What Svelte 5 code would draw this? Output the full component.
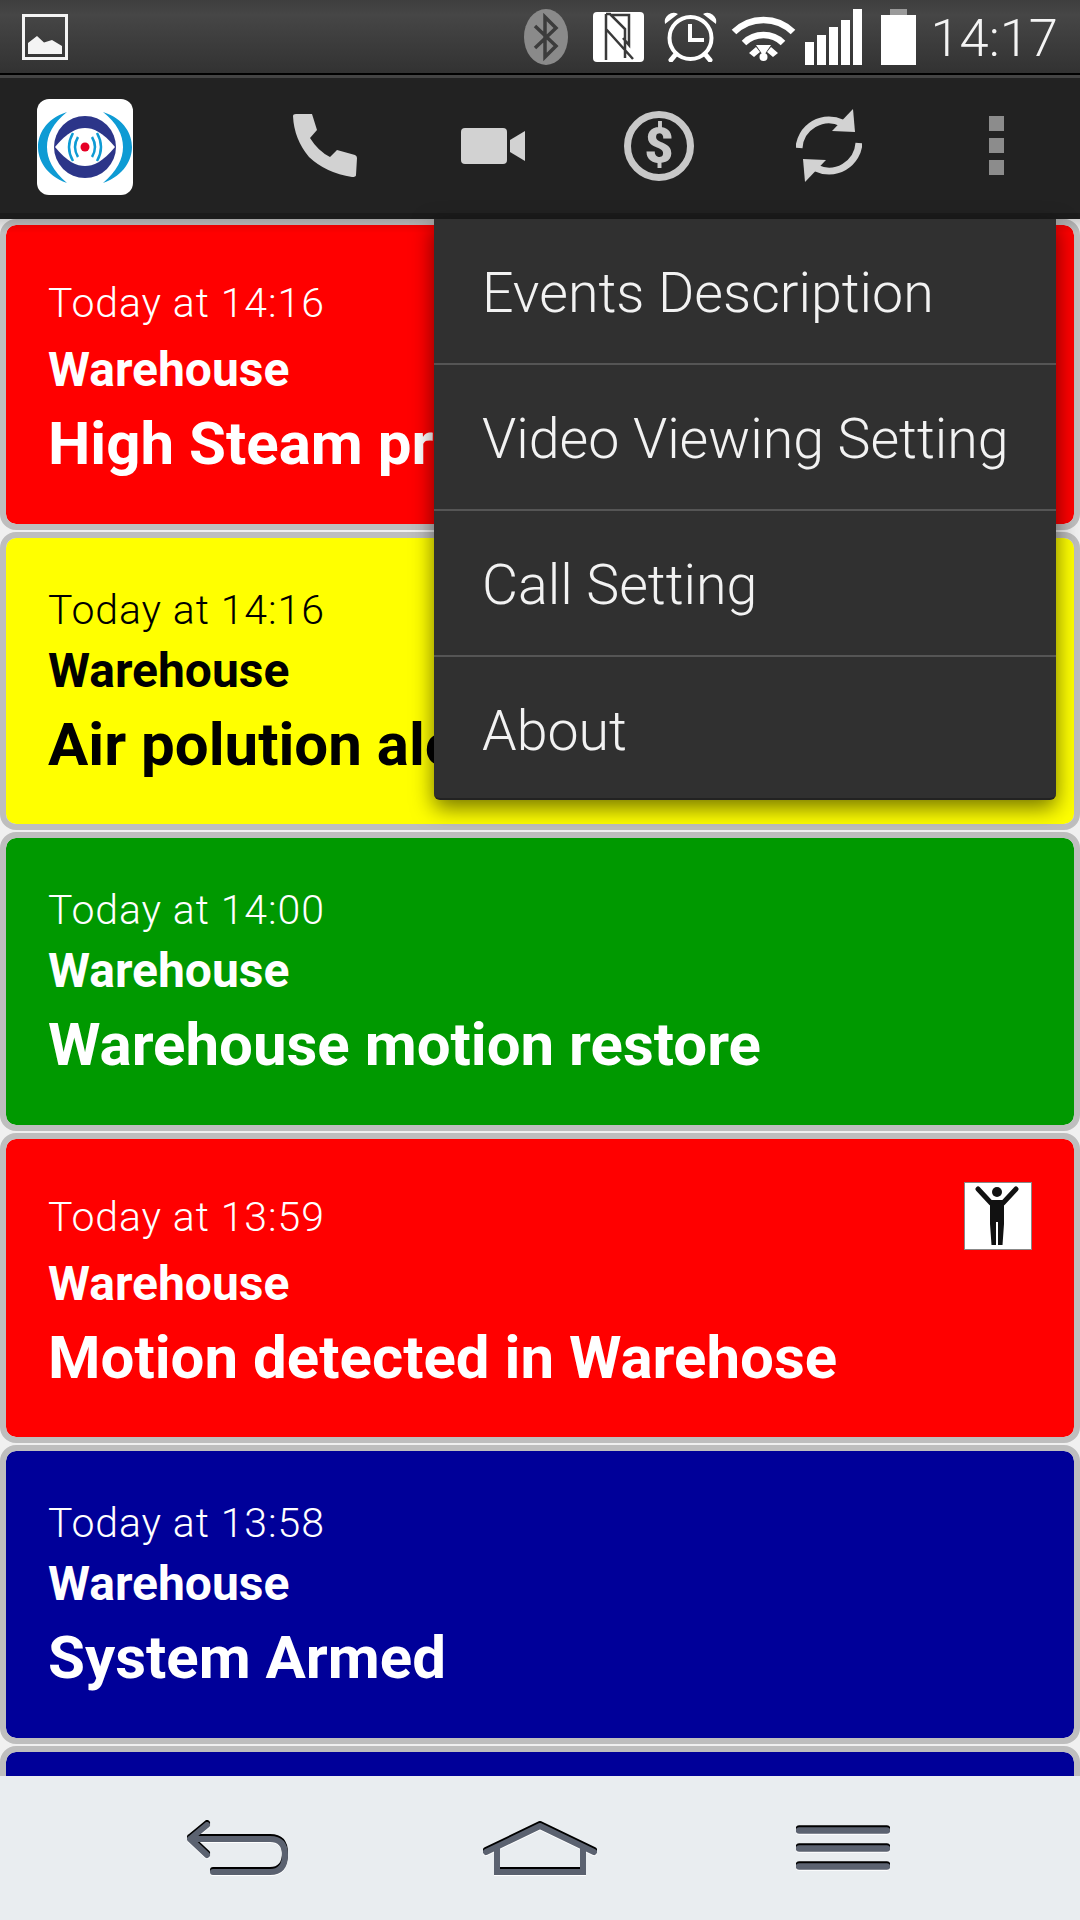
<script>
  const events = [
    { time: "Today at 14:16", place: "Warehouse", title: "High Steam pressure", color: "red", person: true },
    { time: "Today at 14:16", place: "Warehouse", title: "Air polution alert", color: "yellow" },
    { time: "Today at 14:00", place: "Warehouse", title: "Warehouse motion restore", color: "green" },
    { time: "Today at 13:59", place: "Warehouse", title: "Motion detected in Warehose", color: "red", person: true },
    { time: "Today at 13:58", place: "Warehouse", title: "System Armed", color: "navy" },
    { time: "Today at 13:58", place: "Warehouse", title: "System Armed", color: "navy" },
  ];
  const menuItems = ["Events Description", "Video Viewing Setting", "Call Setting", "About"];
  const bars = [23, 30, 38, 45, 56];
</script>

<div class="screen">
  <header class="status">
    <svg class="pic" viewBox="0 0 46 46" width="46" height="46">
      <rect x="1.5" y="1.5" width="43" height="43" fill="none" stroke="#f4f4f4" stroke-width="3" />
      <path d="M6 40V29L15 22L22 28.500L30 26L40 32V40Z" fill="#f4f4f4" />
    </svg>
    <div class="status-right">
      <svg class="sys" viewBox="0 0 44 56" width="44" height="56">
        <ellipse cx="22" cy="28" rx="22" ry="28" fill="#8a8a8a" />
        <path d="M11 17L32 37L21 48V8L32 19L11 39" fill="none" stroke="#3c3c3c" stroke-width="3.500" />
      </svg>
      <svg class="sys nfc" viewBox="0 0 51 50" width="51" height="50">
        <rect width="51" height="50" rx="4" fill="#fff" />
        <path d="M13 2H17L32 17V46M19 3L36 3V33L30 26M13 2V48M13 17L40 47" fill="none" stroke="#3a3a3a" stroke-width="2.500" />
      </svg>
      <svg class="sys alarm" viewBox="0 0 55 51" width="55" height="51">
        <circle cx="27.500" cy="27" r="21" fill="none" stroke="#fff" stroke-width="4" />
        <path d="M2 13A9 9 0 0 1 15 3ZM53 13A9 9 0 0 0 40 3Z" fill="#fff" />
        <path d="M27 13V29H41" fill="none" stroke="#fff" stroke-width="4" />
        <path d="M13 43L8 49M42 43L47 49" stroke="#fff" stroke-width="5" stroke-linecap="round" />
      </svg>
      <svg class="sys wifi" viewBox="0 0 65 48" width="65" height="48">
        <path d="M3 19A42 42 0 0 1 62 19" fill="none" stroke="#fff" stroke-width="6.500" />
        <path d="M13 30A28 28 0 0 1 52 30" fill="none" stroke="#fff" stroke-width="6.500" />
        <path d="M25 34L18 40L23 44L29 39ZM40 34L47 40L42 44L36 39ZM25 32H40L32.500 43Z" fill="#fff" />
        <circle cx="32.500" cy="44" r="4" fill="#fff" />
      </svg>
      <div class="signal">
        {#each bars as h}
          <i style="height:{h}px"></i>
        {/each}
      </div>
      <div class="battery"><b></b><i></i></div>
      <span class="clock">14:17</span>
    </div>
  </header>

  <nav class="actionbar">
    <div class="logo">
      <svg viewBox="0 0 96 96" width="96" height="96">
        <path d="M30 13C8 20 1 36 1 48C1 60 8 76 30 84C16 72 10 60 10 48C10 36 16 24 30 13Z" fill="#0e9bd4" />
        <path d="M66 13C88 20 95 36 95 48C95 60 88 76 66 84C80 72 86 60 86 48C86 36 80 24 66 13Z" fill="#0e9bd4" />
        <circle cx="48" cy="48" r="31" fill="#2c3589" />
        <path d="M18 48C30 33 40 29 48 29C56 29 66 33 78 48C66 63 56 67 48 67C40 67 30 63 18 48Z" fill="#fff" />
        <path d="M41 38Q35 48 41 58M55 38Q61 48 55 58M36 34Q28 48 36 62M60 34Q68 48 60 62" fill="none" stroke="#0e9bd4" stroke-width="2.500" />
        <circle cx="48" cy="48" r="4.500" fill="#e60026" />
      </svg>
    </div>
    <div class="actions">
      <svg class="act" viewBox="0 0 66 65" width="66" height="65">
        <path d="M1 3Q1 1 4 1L20 1L25 17L18 25Q26 38 38 44L45 37L63 42Q65 43 65 45L64 62Q64 64 60 64Q34 60 17 44Q2 26 1 3Z" fill="#d2d2d2" />
      </svg>
      <svg class="act" viewBox="0 0 64 36" width="64" height="36">
        <rect width="46" height="36" rx="4" fill="#d2d2d2" />
        <path d="M49 12L64 3V33L49 24Z" fill="#d2d2d2" />
      </svg>
      <svg class="act" viewBox="0 0 70 70" width="70" height="70">
        <circle cx="35" cy="35" r="31.500" fill="none" stroke="#c8c8c8" stroke-width="7" />
        <text x="35" y="52" text-anchor="middle" class="dollar">$</text>
      </svg>
      <svg class="act" viewBox="0 0 66 73" width="66" height="73">
        <path d="M3 39A30 30 0 0 1 46 14" fill="none" stroke="#d2d2d2" stroke-width="7" />
        <path d="M57 0L59 23L36 22Z" fill="#d2d2d2" />
        <path d="M63 34A30 30 0 0 1 20 59" fill="none" stroke="#d2d2d2" stroke-width="7" />
        <path d="M9 73L7 50L30 51Z" fill="#d2d2d2" />
      </svg>
      <div class="overflow"><i></i><i></i><i></i></div>
    </div>
  </nav>

  <main class="list">
    {#each events as ev}
      <article class="card {ev.color}">
        <div class="row" class:tall={ev.person}>
          <span class="time">{ev.time}</span>
          {#if ev.person}
            <svg class="person" viewBox="0 0 68 68" width="68" height="68">
              <rect x="0.500" y="0.500" width="67" height="67" fill="#fff" stroke="#888" />
              <circle cx="33" cy="10" r="5" fill="#111" />
              <path d="M14 7L27 21M52 7L39 21" stroke="#111" stroke-width="5" stroke-linecap="round" />
              <path d="M26 18H40V42L38.500 63H34V40H32V63H27.500L26 42Z" fill="#111" />
            </svg>
          {/if}
        </div>
        <div class="place">{ev.place}</div>
        <div class="title">{ev.title}</div>
      </article>
    {/each}
    <div class="topshade"></div>
  </main>

  <ul class="menu">
    {#each menuItems as item}
      <li>{item}</li>
    {/each}
  </ul>

  <footer class="softkeys">
    <svg class="key" viewBox="0 0 104 54" width="104" height="54">
      <path d="M21 3L4 17L21 33M4 17H84Q99 17 99 33Q99 50 84 50H27" fill="none" stroke="#5b6270" stroke-width="6" stroke-linecap="round" stroke-linejoin="round" />
    </svg>
    <svg class="key" viewBox="0 0 114 52" width="114" height="52">
      <path d="M3 29L57 3L111 29" fill="none" stroke="#5b6270" stroke-width="6" stroke-linecap="round" stroke-linejoin="round" />
      <path d="M14 24V49H100V24" fill="none" stroke="#5b6270" stroke-width="6" />
    </svg>
    <svg class="key" viewBox="0 0 94 44" width="94" height="44">
      <path d="M3 3.500H91M3 21.500H91M3 39.500H91" fill="none" stroke="#5b6270" stroke-width="6.500" stroke-linecap="round" />
    </svg>
  </footer>
</div>

<style>
  :global(body) {
    margin: 0;
    background: #f0f0f0;
  }

  .screen {
    position: relative;
    width: 1080px;
    height: 1920px;
    display: flex;
    flex-direction: column;
    overflow: hidden;
    font-family: Roboto, "Liberation Sans", sans-serif;
  }

  .status {
    height: 73px;
    flex: none;
    display: flex;
    align-items: center;
    justify-content: space-between;
    padding: 0 22px 0 22px;
    background: linear-gradient(#3e3e3e, #464646 20%, #323232);
    border-bottom: 2px solid #000;
  }

  .status-right {
    display: flex;
    align-items: center;
  }

  .sys {
    margin-right: 25px;
    flex: none;
  }

  .nfc {
    margin-right: 19px;
  }

  .alarm {
    margin-right: 13px;
  }

  .wifi {
    margin-right: 9px;
  }

  .signal {
    display: flex;
    align-items: flex-end;
    gap: 3px;
    height: 56px;
    margin-right: 19px;
  }

  .signal i {
    width: 9px;
    background: #fff;
  }

  .battery {
    width: 35px;
    display: flex;
    flex-direction: column;
    align-items: center;
    margin-right: 14px;
  }

  .battery b {
    width: 17px;
    height: 6px;
    background: #9a9a9a;
  }

  .battery i {
    width: 35px;
    height: 50px;
    background: #fff;
  }

  .clock {
    font-size: 52.500px;
    font-weight: 300;
    color: #f4f4f4;
    line-height: 56px;
    padding-top: 3px;
  }

  .actionbar {
    height: 144px;
    flex: none;
    box-sizing: border-box;
    display: flex;
    align-items: center;
    padding-left: 37px;
    background: #222;
    border-top: 3px solid #444;
    border-bottom: 6px solid #1b1b1b;
  }

  .logo {
    width: 96px;
    height: 96px;
    background: #fff;
    border-radius: 12px;
    overflow: hidden;
    margin-top: 3px;
  }

  .logo svg {
    display: block;
  }

  .actions {
    display: flex;
    align-items: center;
    margin-left: 159px;
  }

  .act {
    flex: none;
    margin-right: 103px;
  }

  .act:nth-child(2) {
    margin-right: 99px;
  }

  .act:nth-child(3) {
    margin-right: 102px;
  }

  .act:nth-child(4) {
    margin-right: 127px;
  }

  .dollar {
    font-family: Roboto, sans-serif;
    font-weight: 900;
    font-size: 50px;
    fill: #c8c8c8;
  }

  .overflow {
    display: flex;
    flex-direction: column;
    gap: 7px;
  }

  .overflow i {
    width: 15px;
    height: 15px;
    background: #8c8c8c;
  }

  .list {
    position: relative;
    flex: 1;
    min-height: 0;
    overflow: hidden;
    display: flex;
    flex-direction: column;
    gap: 2px;
  }

  .topshade {
    position: absolute;
    top: 0;
    left: 0;
    right: 0;
    height: 14px;
    background: linear-gradient(rgba(0, 0, 0, 0.14), rgba(0, 0, 0, 0));
  }

  .card {
    flex: none;
    border: 6px solid #bebebe;
    border-radius: 16px;
    padding: 43px 42px 35.500px 43px;
    background-clip: padding-box;
    color: #fff;
  }

  .red {
    background-color: #f00;
  }

  .yellow {
    background-color: #ff0;
    color: #000;
  }

  .green {
    background-color: #090;
  }

  .navy {
    background-color: #009;
  }

  .row {
    height: 56px;
    display: flex;
    align-items: center;
    justify-content: space-between;
  }

  .row.tall {
    height: 68px;
  }

  .time {
    font-size: 41px;
    font-weight: 300;
    letter-spacing: 0.900px;
    padding-top: 2px;
    margin-left: -1px;
  }

  .place {
    margin-top: 4px;
    height: 60px;
    line-height: 60px;
    font-size: 48px;
    font-weight: 700;
    margin-left: -1px;
  }

  .title {
    height: 88px;
    line-height: 88px;
    font-size: 60px;
    font-weight: 700;
    white-space: nowrap;
    margin-left: -1px;
  }

  .menu {
    position: absolute;
    left: 434px;
    top: 219px;
    width: 622px;
    height: 581px;
    box-sizing: border-box;
    margin: 0;
    padding: 0;
    list-style: none;
    background: #303030;
    border-radius: 0 0 6px 6px;
    border-bottom: 2px solid #222;
    box-shadow: 0 8px 22px rgba(0, 0, 0, 0.55);
  }

  .menu li {
    height: 146px;
    box-sizing: border-box;
    padding: 4px 0 0 48px;
    display: flex;
    align-items: center;
    font-size: 55.500px;
    font-weight: 300;
    color: #f2f2f2;
    border-bottom: 2px solid #555;
  }

  .menu li:last-child {
    border-bottom: none;
    height: 143px;
    padding-top: 6px;
  }

  .softkeys {
    position: relative;
    height: 144px;
    flex: none;
    box-sizing: border-box;
    display: flex;
    align-items: center;
    background: #e9edf0;
    padding: 2px 0 0 186px;
    gap: 193px;
  }

  .key {
    flex: none;
    filter: drop-shadow(0 -2px 0 #000) drop-shadow(0 1px 0 #fff);
  }

  .key:last-child {
    margin-left: 6px;
  }
</style>
